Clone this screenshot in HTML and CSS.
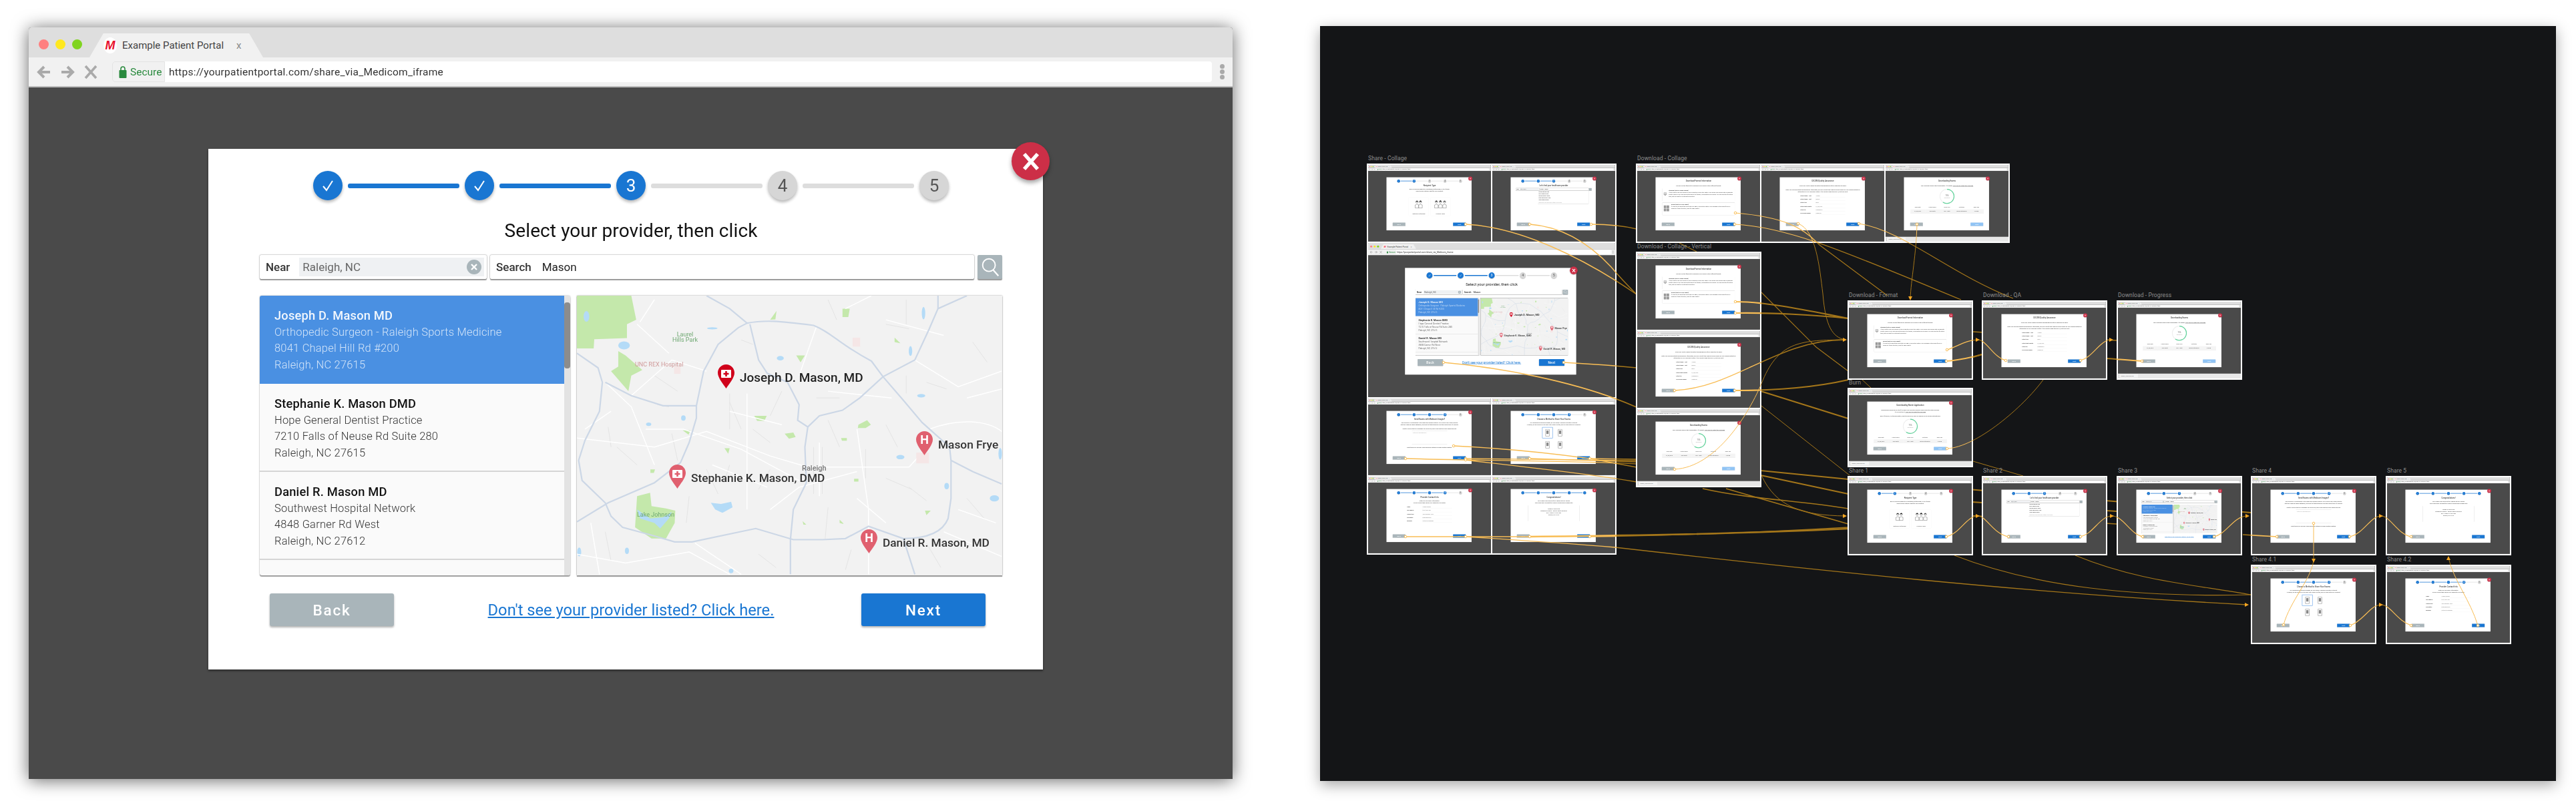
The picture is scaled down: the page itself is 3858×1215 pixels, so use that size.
FILE: index.html
```html
<!DOCTYPE html>
<html lang="en">
<head>
  <meta charset="UTF-8">
  <title>Share via Medicom - prototype</title>
  <link rel="stylesheet" href="styles.css">
</head>
<body>

<div class="left">
  <div class="win" id="mainWin">
    <div class="chrome">
      <div class="tabbar">
        <span class="light red"></span><span class="light yellow"></span><span class="light green"></span>
        <div class="tab">
          <span class="favicon">M</span>
          <span class="tabtitle">Example Patient Portal</span>
          <span class="tabclose">x</span>
        </div>
      </div>
      <div class="toolbar">
        <div class="nav">
          <svg viewBox="0 0 22 24" width="22" height="24"><path d="M11 4 3 12l8 8M3 12h17" fill="none" stroke="#aaa" stroke-width="4"/></svg>
          <svg viewBox="0 0 22 24" width="22" height="24"><path d="M11 4l8 8-8 8M19 12H2" fill="none" stroke="#aaa" stroke-width="4"/></svg>
          <svg viewBox="0 0 22 24" width="22" height="24"><path d="M3 3l16 18M19 3 3 21" fill="none" stroke="#aaa" stroke-width="3.6"/></svg>
        </div>
        <div class="address">
          <div class="secure">
            <svg viewBox="0 0 12 20" width="12" height="20"><path d="M3 8V5a3 3 0 0 1 6 0v3" fill="none" stroke="#2a8a3e" stroke-width="1.6"/><rect x="0.5" y="7" width="11" height="12" rx="1" fill="#2a8a3e"/></svg>
            <span>Secure</span>
          </div>
          <span class="url">https://yourpatientportal.com/share_via_Medicom_iframe</span>
        </div>
        <div class="menu"><i></i><i></i><i></i></div>
      </div>
    </div>
    <div class="stage">
      <div class="modal">
        <span class="close">
          <svg viewBox="0 0 24 24" width="30" height="30"><path d="M4 3l16 18M20 3 4 21" stroke="#fff" stroke-width="4.4" fill="none"/></svg>
        </span>
        <div class="modal-body">
          <div class="stepper">
            <span class="step on"><svg viewBox="0 0 24 24" width="24" height="24"><path d="M5 13l5 6L19 5" fill="none" stroke="#fff" stroke-width="2"/></svg></span>
            <span class="bar on"></span>
            <span class="step on"><svg viewBox="0 0 24 24" width="24" height="24"><path d="M5 13l5 6L19 5" fill="none" stroke="#fff" stroke-width="2"/></svg></span>
            <span class="bar on"></span>
            <span class="step on">3</span>
            <span class="bar"></span>
            <span class="step">4</span>
            <span class="bar"></span>
            <span class="step">5</span>
          </div>
          <h1 class="title">Select your provider, then click</h1>
          <div class="searchrow">
            <div class="sbox near">
              <b>Near</b>
              <span class="nearinput">Raleigh, NC<i class="clear">
                <svg viewBox="0 0 22 22" width="22" height="22"><circle cx="11" cy="11" r="11" fill="#a9b5ba"/><path d="M7 7l8 8M15 7l-8 8" stroke="#fff" stroke-width="2.4"/></svg>
              </i></span>
            </div>
            <div class="sbox query"><b>Search</b><span>Mason</span></div>
            <div class="sbtn">
              <svg viewBox="0 0 36 36" width="34" height="34"><circle cx="16" cy="15" r="10" fill="none" stroke="#fff" stroke-width="2"/><path d="M23 23l8 9" stroke="#fff" stroke-width="2.4"/></svg>
            </div>
          </div>
          <div class="results">
            <div class="list">
              <div class="rows">
                <div class="row picked">
                  <strong>Joseph D. Mason MD</strong>
                  <span>Orthopedic Surgeon - Raleigh Sports Medicine</span>
                  <span>8041 Chapel Hill Rd #200</span>
                  <span>Raleigh, NC 27615</span>
                </div>
                <div class="row">
                  <strong>Stephanie K. Mason DMD</strong>
                  <span>Hope General Dentist Practice</span>
                  <span>7210 Falls of Neuse Rd Suite 280</span>
                  <span>Raleigh, NC 27615</span>
                </div>
                <div class="row">
                  <strong>Daniel R. Mason MD</strong>
                  <span>Southwest Hospital Network</span>
                  <span>4848 Garner Rd West</span>
                  <span>Raleigh, NC 27612</span>
                </div>
              </div>
              <div class="scroll"><i></i></div>
            </div>
            <div class="map">
              <svg class="mapart" viewBox="32 42 1470 1253" preserveAspectRatio="none">
                <g fill="#c4e8ab">
                  <path d="M32 42H220L237 150 205 170V232L92 237 90 278H32z"/>
                  <path d="M175 290 200 310 258 375 220 400 210 470 150 380 175 360z"/>
                  <path d="M233 1080 290 1130H340L370 1060 372 1005 340 995 290 985 285 925 240 940z"/>
                  <path d="M645 580H688L680 603H655zM750 660 780 655 788 675 765 683zM1005 620 1035 600 1048 620 1030 635H1003zM790 310H820L805 340zM950 100H975L970 138H950zM700 150 722 110 718 148zM1130 250 1150 255 1130 230zM398 645H424L418 665zM542 725H560L555 750zM945 680H965V692H948zM990 862H1005V875H990zM1235 1005H1255L1240 1025zM940 1045 955 1065 940 1060zM286 820H302L298 836H286zM812 1052 825 1068H815z"/>
                </g>
                <g fill="#b4dbf7">
                  <path d="M240 1000 285 1040 330 1035 360 1010 350 1040 320 1085 300 1060 250 1040z"/>
                  <path d="M495 970 530 975 565 965 570 990 535 1015 510 1000z"/>
                  <ellipse cx="195" cy="265" rx="20" ry="18"/><ellipse cx="65" cy="135" rx="10" ry="24"/>
                  <ellipse cx="1475" cy="950" rx="16" ry="14"/><ellipse cx="1185" cy="290" rx="6" ry="22"/>
                  <ellipse cx="1150" cy="765" rx="14" ry="10"/><ellipse cx="735" cy="322" rx="12" ry="10"/>
                  <ellipse cx="1495" cy="750" rx="6" ry="26"/><ellipse cx="1222" cy="490" rx="14" ry="8"/>
                  <ellipse cx="400" cy="590" rx="8" ry="12"/><ellipse cx="280" cy="618" rx="9" ry="8"/>
                  <ellipse cx="500" cy="188" rx="18" ry="5"/><ellipse cx="40" cy="1190" rx="7" ry="20"/>
                  <ellipse cx="205" cy="1185" rx="7" ry="14"/><ellipse cx="565" cy="1275" rx="8" ry="10"/>
                  <ellipse cx="1310" cy="895" rx="8" ry="14"/><ellipse cx="1230" cy="120" rx="6" ry="28"/>
                </g>
                <g class="faint">
                  <path d="M560 480V640M740 470 700 580M1170 400V480M1030 730V860M850 720V930M880 720V930"/>
                  <path d="M360 660 380 780M140 630 150 720M700 820 660 910M1100 860 1190 910M900 990 890 1130"/>
                  <path d="M600 240 640 260M1100 170 1180 190M1240 430 1310 460M310 530 350 540M860 500H940"/>
                  <path d="M1170 60V170M900 60 930 150M300 400 380 470M560 800 540 880M1400 250 1450 340M1380 950 1440 1040"/>
                  <path d="M170 720 240 800M480 820 520 930M660 1200 720 1260M980 1180 960 1270M1240 1150 1290 1260M130 1100 150 1230"/>
                  <path d="M560 520 600 640M640 640 700 700M900 600 940 720M1100 620 1140 720M1180 900 1240 960M420 940 410 1060"/>
                </g>
                <g class="minor">
                  <path d="M32 680 300 720 480 650 700 760 830 810H1000L1180 810 1250 710"/>
                  <path d="M130 430 220 540 300 800"/>
                  <path d="M270 640H400L600 730 800 870"/>
                  <path d="M1250 640C1350 590 1450 600 1500 650"/>
                  <path d="M700 1000 800 900 1000 830"/>
                  <path d="M620 480V1000"/>
                  <path d="M870 700V940"/>
                  <path d="M440 1150 600 1290"/>
                  <path d="M1000 950 1100 1060"/>
                  <path d="M220 490 360 330 480 380"/>
                  <path d="M240 170 350 300"/>
                  <path d="M860 180 800 400"/>
                  <path d="M1200 330 1350 450 1500 380"/>
                  <path d="M1000 640 1040 1000V1290"/>
                  <path d="M32 1200 200 1240 420 1190 560 1290"/>
                  <path d="M80 1060 110 1290"/>
                  <path d="M1300 1100 1500 1210"/>
                  <path d="M960 100 1050 42"/>
                  <path d="M560 560 740 620M500 800 690 900M900 470 1120 500M1100 150 1300 220"/>
                  <path d="M300 60 250 160M1380 500 1500 460M1350 1000 1480 1060M150 560 60 640"/>
                </g>
                <g class="major">
                  <path d="M480 42 560 100 620 165C680 150 730 155 850 175 910 205 940 260 1050 335L1090 405 1160 510 1225 610 1320 720 1325 780V950L1315 1040C1300 1090 1260 1130 1160 1130L1040 1075 960 1130 880 1135H780L650 1085 430 1145H370L290 1115 190 1080 150 1030 130 970 50 870 38 780 60 690 110 560 120 430 105 365 32 300"/>
                  <path d="M130 430 220 490 330 535H445V590L420 700 390 790 300 880 140 970 32 1055"/>
                  <path d="M445 535 470 380 520 260 590 185 620 165"/>
                  <path d="M630 170 660 330 690 390 760 430 800 530 795 600 830 630 820 720 825 880 780 1000 770 1135V1290"/>
                  <path d="M830 630 870 580 950 555 1010 500 1090 405 1200 330 1250 190 1280 100 1380 42"/>
                  <path d="M1280 100V42M1325 780 1400 830 1500 885M1160 1130 1200 1290"/>
                </g>
                <g fill="#f5e6e6"><rect x="985" y="230" width="26" height="40"/><rect x="1205" y="745" width="44" height="48"/><rect x="368" y="360" width="22" height="32"/></g>
              </svg>
              <span class="place raleigh">Raleigh</span>
              <span class="place hospital">UNC REX Hospital</span>
              <span class="place park laurel">Laurel<br>Hills Park</span>
              <span class="place park lake">Lake Johnson</span>

              <div class="pin top joseph">
                <svg viewBox="0 0 25 36" width="25" height="36"><path class="pinbody" d="M12.5 0C5.6 0 0 5.6 0 12.5 0 20 8 29 12.5 36 17 29 25 20 25 12.5 25 5.6 19.4 0 12.5 0z"/><rect x="5" y="8" width="15" height="12" rx="1" fill="#fff"/><path d="M12.5 10v8M8.5 14h8" stroke="#d0021b" stroke-width="2.6"/></svg>
                <span>Joseph D. Mason, MD</span>
              </div>
              <div class="pin frye">
                <svg viewBox="0 0 25 36" width="25" height="36"><path class="pinbody" d="M12.5 0C5.6 0 0 5.6 0 12.5 0 20 8 29 12.5 36 17 29 25 20 25 12.5 25 5.6 19.4 0 12.5 0z"/><text x="12.5" y="19" text-anchor="middle">H</text></svg>
                <span>Mason Frye</span>
              </div>
              <div class="pin stephanie">
                <svg viewBox="0 0 25 36" width="25" height="36"><path class="pinbody" d="M12.5 0C5.6 0 0 5.6 0 12.5 0 20 8 29 12.5 36 17 29 25 20 25 12.5 25 5.6 19.4 0 12.5 0z"/><rect x="5" y="8" width="15" height="12" rx="1" fill="#fff"/><path d="M12.5 10v8M8.5 14h8" stroke="#e0606f" stroke-width="2.6"/></svg>
                <span>Stephanie K. Mason, DMD</span>
              </div>
              <div class="pin daniel">
                <svg viewBox="0 0 25 36" width="25" height="36"><path class="pinbody" d="M12.5 0C5.6 0 0 5.6 0 12.5 0 20 8 29 12.5 36 17 29 25 20 25 12.5 25 5.6 19.4 0 12.5 0z"/><text x="12.5" y="19" text-anchor="middle">H</text></svg>
                <span>Daniel R. Mason, MD</span>
              </div>
            </div>
          </div>
          <div class="foot">
            <span class="btn back">Back</span>
            <a class="notlisted" href="#">Don't see your provider listed? Click here.</a>
            <span class="btn next">Next</span>
          </div>
        </div>
      </div>
    </div>
  </div>
</div>

<!-- prototype board, filled by script.js -->
<div class="board" id="board">
  <svg class="wires under" id="wiresUnder" viewBox="1977 39 1851 1131"></svg>
  <svg class="wires over" id="wiresOver" viewBox="1977 39 1851 1131"></svg>
</div>

<script src="script.js"></script>
</body>
</html>
```

FILE: styles.css
```css
body {
  margin: 0;
  width: 3858px;
  height: 1215px;
  overflow: hidden;
  background: #fff;
  display: flex;
  align-items: flex-start;
  font-family: Roboto, "Liberation Sans", sans-serif;
}

.left {
  padding: 41px 131px 0 43px;
}

/* browser window */
.win {
  width: 1803px;
  height: 1126px;
  display: flex;
  flex-direction: column;
  border-radius: 4px 4px 0 0;
  overflow: hidden;
  background: #4a4a4a;
}

.left .win {
  box-shadow: 0 2px 26px rgba(0,0,0,0.6);
  filter: blur(0.4px);
}

.tabbar {
  height: 45px;
  background: #dedede;
  display: flex;
  align-items: flex-start;
  padding-left: 15px;
  box-sizing: border-box;
}

.light {
  width: 15px;
  height: 15px;
  border-radius: 50%;
  margin: 18px 10px 0 0;
}

.red { background: #ff8080; }
.yellow { background: #ffe81f; }
.green { background: #80d420; }

.tab {
  width: 260px;
  height: 36px;
  margin: 9px 0 0 1px;
  background: #f1f1f1;
  clip-path: polygon(8% 0, 92% 0, 100% 100%, 0 100%);
  display: flex;
  align-items: center;
  font-size: 15px;
  color: #444;
}

.favicon {
  width: 20px;
  height: 24px;
  margin: 0 8px 0 21px;
  border-radius: 50%;
  background: #fff;
  color: #e8112d;
  font: italic bold 18px/24px "Liberation Sans", sans-serif;
  text-align: center;
}

.tabclose {
  margin-left: 19px;
  color: #888;
}

.toolbar {
  height: 45px;
  box-sizing: border-box;
  background: #f1f1f1;
  border-bottom: 2px solid #bbb;
  display: flex;
  align-items: center;
}

.nav {
  display: flex;
  gap: 13px;
  margin: 0 21px 0 12px;
}

.address {
  flex: 1;
  height: 31px;
  background: #fff;
  border-radius: 4px;
  display: flex;
  align-items: center;
  font-size: 15.5px;
}

.secure {
  width: 79px;
  height: 31px;
  box-sizing: border-box;
  padding-left: 9px;
  margin-right: 6px;
  background: #f1f1f1;
  border: 1px solid #e4e4e4;
  border-radius: 4px 0 0 4px;
  display: flex;
  align-items: center;
  gap: 5px;
  color: #2a8a3e;
}

.url {
  color: #333;
  letter-spacing: 0.25px;
}

.menu {
  width: 31px;
  display: flex;
  flex-direction: column;
  align-items: center;
  gap: 1px;
}

.menu i {
  width: 7px;
  height: 7px;
  border-radius: 50%;
  background: #aaa;
}

.stage {
  flex: 1;
  position: relative;
  background: #4a4a4a;
  padding: 92px 0 0 269px;
}

/* modal */
.modal {
  width: 1250px;
  height: 780px;
  position: relative;
  background: #fff;
  box-shadow: 0 2px 3px rgba(0,0,0,0.45);
}

.close {
  position: absolute;
  top: -10px;
  right: -10px;
  width: 57px;
  height: 57px;
  border-radius: 50%;
  background: #cc2f47;
  box-shadow: 0 4px 6px rgba(0,0,0,0.35);
  display: flex;
  align-items: center;
  justify-content: center;
}

.modal-body {
  height: 100%;
  box-sizing: border-box;
  padding: 33px 61px 65px 77px;
  display: flex;
  flex-direction: column;
}

.stepper {
  display: flex;
  align-items: center;
  justify-content: center;
  gap: 8px;
  height: 44px;
  flex: none;
}

.step {
  width: 44px;
  height: 44px;
  border-radius: 50%;
  background: #d6d6d6;
  color: #555;
  font-size: 26px;
  display: flex;
  align-items: center;
  justify-content: center;
  box-shadow: 0 3px 4px rgba(0,0,0,0.28);
}

.step.on {
  background: #1976d2;
  color: #fff;
}

.bar {
  width: 167px;
  height: 7px;
  border-radius: 3px;
  background: #ddd;
}

.bar.on {
  background: #1976d2;
}

.title {
  margin: 30px 0 20px;
  font-size: 28px;
  line-height: 32px;
  font-weight: 400;
  text-align: center;
  color: #111;
  letter-spacing: 0.1px;
}

.searchrow {
  display: flex;
  gap: 5px;
  height: 36px;
  font-size: 17px;
}

.sbox {
  background: #fff;
  box-shadow: 0 0 2px rgba(0,0,0,0.55), 0 2px 1px #aaa;
  border-radius: 2px;
  display: flex;
  align-items: center;
  color: #222;
}

.sbox b {
  font-weight: 500;
  color: #333;
}

.near {
  width: 340px;
  padding-left: 9px;
  box-sizing: border-box;
  gap: 14px;
}

.nearinput {
  flex: 1;
  height: 28px;
  margin-right: 4px;
  padding-left: 5px;
  background: #eff1f3;
  color: #666;
  display: flex;
  align-items: center;
  justify-content: space-between;
}

.clear {
  display: flex;
  margin-right: 4px;
}

.query {
  flex: 1;
  padding-left: 9px;
  gap: 16px;
}

.sbtn {
  width: 37px;
  background: #a9b5ba;
  box-shadow: 0 2px 1px #999;
  border-radius: 2px;
  display: flex;
  align-items: center;
  justify-content: center;
}

.results {
  margin-top: 25px;
  height: 419px;
  display: flex;
  gap: 10px;
  flex: none;
}

.list {
  width: 465px;
  height: 419px;
  overflow: hidden;
  display: flex;
  background: #fafafa;
  border-radius: 3px;
  box-shadow: 0 0 2px rgba(0,0,0,0.4), 0 2px 1px #aaa;
}

.rows {
  flex: 1;
}

.row {
  height: 132px;
  padding-top: 18px;
  box-sizing: border-box;
  border-bottom: 2px solid #d5d5d5;
  display: flex;
  flex-direction: column;
  padding-left: 22px;
  font-size: 16.5px;
  line-height: 24.7px;
  font-weight: 300;
  color: #333;
  letter-spacing: 0.2px;
}

.row strong {
  font-size: 18.3px;
  font-weight: 500;
  color: #111;
}

.row.picked {
  background: #4a90e2;
  border-bottom: 0;
  color: #d2e4f9;
}

.row.picked strong {
  color: #f2f7fd;
}

.scroll {
  width: 9px;
  background: #e3e3e3;
  padding-top: 10px;
}

.scroll i {
  display: block;
  height: 99px;
  border-radius: 4px;
  background: #8c8c8c;
}

.map {
  flex: 1;
  position: relative;
  overflow: hidden;
  background: #f2f2f2;
  box-shadow: 0 0 2px rgba(0,0,0,0.4), 0 2px 1px #aaa;
}

.mapart {
  position: absolute;
  left: 0;
  top: 0;
  width: 100%;
  height: 100%;
}

.mapart path, .mapart ellipse, .mapart rect {
  vector-effect: non-scaling-stroke;
}

.major path {
  fill: none;
  stroke: #ccd7e6;
  stroke-width: 2.2;
}

.minor path {
  fill: none;
  stroke: #fff;
  stroke-width: 1.5;
}

.faint path {
  fill: none;
  stroke: #e4e4e4;
  stroke-width: 1;
}

.place {
  position: absolute;
  font-size: 9px;
  line-height: 8px;
  white-space: nowrap;
}

.raleigh { left: 337px; top: 255px; font-size: 11px; font-weight: 500; color: #777; }
.hospital { left: 87px; top: 99px; color: #d09a9a; }
.park { color: #6ea871; text-align: center; }
.laurel { left: 143px; top: 54px; }
.lake { left: 90px; top: 324px; }

.pin {
  position: absolute;
  display: flex;
  gap: 8px;
  white-space: nowrap;
  font-size: 17.3px;
  line-height: 26px;
  font-weight: 500;
  color: #333;
}

.pin span {
  margin-top: 7px;
}

.pin.top {
  font-size: 19px;
  color: #222;
}

.pinbody { fill: #e0606f; }
.pin.top .pinbody { fill: #d0021b; }

.pin text {
  fill: #fff;
  font: bold 18px Roboto, sans-serif;
}

.joseph { left: 211px; top: 103px; }
.frye { left: 508px; top: 203px; }
.stephanie { left: 138px; top: 253px; }
.daniel { left: 425px; top: 350px; }

.foot {
  margin-top: auto;
  height: 49px;
  flex: none;
  padding: 0 25px 0 15px;
  display: flex;
  align-items: center;
  justify-content: space-between;
}

.btn {
  width: 186px;
  height: 49px;
  border-radius: 3px;
  color: #fff;
  font-size: 22.5px;
  font-weight: 500;
  letter-spacing: 1.8px;
  display: flex;
  align-items: center;
  justify-content: center;
  box-shadow: 0 2px 3px rgba(0,0,0,0.3);
}

.back { background: #a9b5ba; }
.next { background: #1976d2; }
.next.pale { background: #90c4f5; }

.notlisted {
  margin-left: 10px;
  font-size: 23.7px;
  color: #1976d2;
}

/* board */
.board {
  position: relative;
  width: 1851px;
  height: 1131px;
  margin-top: 39px;
  background: #141517;
  box-shadow: 0 6px 20px rgba(0,0,0,0.35);
}

.wires {
  position: absolute;
  left: 0;
  top: 0;
  width: 100%;
  height: 100%;
}

.wires path {
  fill: none;
}

.under path { stroke: #a4761a; }
.over path { stroke: #f8bd55; }
.over circle { fill: #fff; stroke: #f8bd55; stroke-width: 1; }
.over polygon { fill: #f5a623; }

.over {
  z-index: 2;
  pointer-events: none;
}

.frame {
  position: absolute;
  display: grid;
  gap: 2px;
  padding: 2px;
  background: #fff;
  z-index: 1;
}

.framelabel {
  position: absolute;
  left: 2px;
  top: -13px;
  font-size: 8.5px;
  line-height: 10px;
  letter-spacing: 0.1px;
  color: #8e8e8e;
  white-space: nowrap;
}

.thumb {
  width: 184px;
  height: 115px;
  overflow: hidden;
  filter: blur(0.3px);
}

.thumb .win {
  transform: scale(0.102);
  transform-origin: 0 0;
}

.thumb.big {
  width: 370px;
  height: 231px;
  grid-column: span 2;
}

.thumb.big .win {
  transform: scale(0.2052);
}

/* other wizard screens, only seen small */
.v-sub {
  margin: 0 0 24px;
  font-size: 20px;
  line-height: 30px;
  text-align: center;
  color: #333;
}

.v-head {
  margin: 6px 0 40px;
}

.v-cards {
  display: flex;
  justify-content: center;
  gap: 40px;
  margin-top: 60px;
}

.v-card {
  width: 280px;
  height: 260px;
  box-shadow: 0 0 6px rgba(0,0,0,0.25);
  display: flex;
  flex-direction: column;
  align-items: center;
  justify-content: space-between;
  padding: 24px 0 16px;
  box-sizing: border-box;
  font-size: 18px;
  color: #444;
}

.v-devices {
  display: grid;
  grid-template-columns: 145px 145px;
  gap: 20px 40px;
  justify-content: center;
}

.v-device {
  height: 157px;
  box-shadow: 0 0 4px rgba(0,0,0,0.2);
  display: flex;
  align-items: center;
  justify-content: center;
}

.v-device.sel {
  outline: 5px solid #4a90e2;
}

.v-drop {
  width: 720px;
  margin: 0 0 0 323px;
  padding: 6px 12px;
  box-shadow: 0 1px 6px rgba(0,0,0,0.35);
  font-size: 19px;
  line-height: 30px;
  color: #333;
}

.v-drop span {
  display: block;
}

.v-drop em {
  font-style: normal;
  color: #aaa;
}

.v-info {
  margin: 0 0 25px 24px;
  width: 1062px;
  height: 183px;
  box-sizing: border-box;
  padding: 18px 16px;
  box-shadow: 0 0 4px rgba(0,0,0,0.18);
  display: flex;
  gap: 28px;
  font-size: 19px;
  line-height: 28px;
  color: #444;
}

.v-info b {
  display: block;
  color: #222;
  font-weight: 500;
}

.v-form {
  width: 660px;
  margin: 0 auto;
  display: grid;
  grid-template-columns: 220px 1fr;
  row-gap: 8px;
  font-size: 18px;
  line-height: 42px;
  color: #444;
}

.v-form span {
  border-bottom: 2px solid #e5e5e5;
  padding-left: 8px;
  color: #777;
}

.v-ring {
  display: block;
  margin: 0 auto 20px;
}

.v-table {
  width: 1075px;
  margin: 0 auto;
  display: grid;
  grid-template-columns: repeat(5, 1fr);
  font-size: 18px;
  line-height: 56px;
  color: #555;
  text-align: center;
  box-shadow: 0 0 3px rgba(0,0,0,0.25);
}

.v-table i {
  font-style: normal;
  background: #f4f4f4;
}

.v-area {
  width: 520px;
  height: 190px;
  margin: 0 auto 36px;
  padding: 12px;
  box-sizing: border-box;
  box-shadow: 0 0 4px rgba(0,0,0,0.25);
  color: #aaa;
  font-size: 18px;
}

.v-note {
  width: 750px;
  height: 230px;
  margin: 0 auto;
  padding-top: 30px;
  box-sizing: border-box;
  box-shadow: 0 0 4px rgba(0,0,0,0.25);
  font-size: 19px;
  line-height: 30px;
  text-align: center;
  color: #444;
}

.dlbar {
  position: absolute;
  left: 0;
  right: 0;
  bottom: 0;
  height: 70px;
  background: #e8e8e8;
  display: flex;
  align-items: center;
  padding-left: 14px;
}

.dlfile {
  width: 250px;
  height: 50px;
  line-height: 50px;
  background: #f4f4f4;
  box-shadow: 0 0 4px rgba(0,0,0,0.3);
  font-size: 20px;
  color: #666;
  padding-left: 30px;
}
```

FILE: script.js
```js
// builds the small screens on the prototype board from the big window
const mainWin = document.getElementById("mainWin");
const board = document.getElementById("board");
const ORIGIN_X = 1977, ORIGIN_Y = 39;

const check = '<svg viewBox="0 0 24 24" width="24" height="24"><path d="M5 13l5 6L19 5" fill="none" stroke="#fff" stroke-width="2"/></svg>';

function stepper(done) {
  let html = '<div class="stepper">';
  for (let i = 1; i <= 5; i++) {
    html += '<span class="step' + (i <= done ? ' on' : '') + '">' + (i < done ? check : i) + '</span>';
    if (i < 5) html += '<span class="bar' + (i < done ? ' on' : '') + '"></span>';
  }
  return html + '</div>';
}

function foot(paleNext) {
  return '<div class="foot"><span class="btn back">Back</span><span class="btn next' + (paleNext ? ' pale' : '') + '">Next</span></div>';
}

function person(x, hair) {
  return '<circle cx="' + x + '" cy="36" r="17" fill="#fff" stroke="#111" stroke-width="3"/>' +
    '<path d="M' + (x - 17) + ' 32q17 -' + hair + ' 34 0" fill="#111" stroke="#111" stroke-width="3"/>' +
    '<path d="M' + (x - 26) + ' 124v-44q26 -20 52 0v44z" fill="#fff" stroke="#111" stroke-width="3"/>';
}

const doctors = '<svg viewBox="0 0 170 130" width="170" height="130">' + person(60, 22) + person(112, 26) + '</svg>';
const friends = '<svg viewBox="0 0 190 130" width="190" height="130">' + person(35, 30) + person(95, 34) + person(155, 18) + '</svg>';
const device = '<svg viewBox="0 0 80 110" width="80" height="110"><rect x="12" y="4" width="56" height="102" rx="6" fill="#fff" stroke="#555" stroke-width="4"/><rect x="24" y="22" width="32" height="50" fill="#888"/></svg>';
const burnIcon = '<svg viewBox="0 0 120 130" width="120" height="130"><rect x="6" y="10" width="108" height="80" rx="6" fill="#999"/><rect x="22" y="24" width="76" height="52" fill="#eee"/><path d="M60 36v28M46 50h28" stroke="#666" stroke-width="6"/><path d="M34 96h52v20H34z" fill="#999"/></svg>';
const gridIcon = '<svg viewBox="0 0 120 130" width="120" height="130"><g fill="#999"><rect x="4" y="6" width="52" height="56"/><rect x="64" y="6" width="52" height="56"/><rect x="4" y="70" width="52" height="56"/><rect x="64" y="70" width="52" height="56"/></g></svg>';
const ring = '<svg class="v-ring" viewBox="0 0 230 230" width="230" height="230"><circle cx="115" cy="115" r="104" fill="none" stroke="#eee" stroke-width="10"/><path d="M115 11a104 104 0 1 1 -60 190" fill="none" stroke="#5fd39a" stroke-width="12"/><text x="115" y="112" text-anchor="middle" font-size="26" fill="#777">75%</text><text x="115" y="142" text-anchor="middle" font-size="18" fill="#aaa">Remaining</text></svg>';

const statusTable = '<div class="v-table">' +
  '<span>Exam Date</span><span>Patient Name</span><span>Exam Type</span><span>Institution</span><span>Exam Size</span>' +
  '<i>01/28/2018</i><i>Jane Smith</i><i>MRI - Right</i><i>Raleigh Orthopedic</i><i>19.8 MB</i></div>';

const screens = {
  recipient: stepper(2) +
    '<h1 class="title">Recipient Type</h1>' +
    '<p class="v-sub">Are you sending exams to a healthcare professional, or to a friend?<br>Select which category best fits your recipient.</p>' +
    '<div class="v-cards"><div class="v-card">' + doctors + 'Healthcare Professional</div><div class="v-card">' + friends + 'Friends &amp; Family</div></div>' + foot(),
  find: stepper(3) +
    '<h1 class="title">Let\'s find your healthcare provider</h1>' +
    '<div class="searchrow"><div class="sbox near"><b>Near</b><span class="nearinput">City, ST, ZIP</span></div><div class="sbox query"><b>Search</b><span>Barber</span></div><div class="sbtn"></div></div>' +
    '<div class="v-drop"><span>Donald Barber MD</span><span>Bruce Barber MD</span><span>Emma Barber DMD</span><span>Debra Anderson PhD</span><span>Sarah Barber DDS</span><em>Don\'t see your provider listed? Click here.</em></div>' + foot(),
  medicom: stepper(4) +
    '<h1 class="title">Send Exams with Medicom Images?</h1>' +
    '<p class="v-sub">This provider is a participant in the Medicom Images network. We\'ll deliver your exams directly<br>into their medical image database, ensuring the fastest delivery and the highest level of security.</p>' +
    '<p class="v-sub">Want to include text or a message you would say, then click Next and we\'ll handle the rest.</p>' +
    '<div class="v-area">Write your message here...</div>' +
    '<p class="v-sub">Don\'t think your provider uses Medicom network? Choose another method.</p>' + foot(),
  method: stepper(4) +
    '<h1 class="title">Choose a Method to Share Your Exams</h1>' +
    '<p class="v-sub">We recommend Medicom Images, as your exam is always encrypted in transit.<br>However, we also allow you to share your exams via fax, mail or email with your recipient.</p>' +
    '<div class="v-devices"><div class="v-device sel">' + device + '</div><div class="v-device">' + device + '</div><div class="v-device">' + device + '</div><div class="v-device">' + device + '</div></div>' + foot(),
  contact: stepper(4) +
    '<h1 class="title">Provider Contact Info</h1>' +
    '<p class="v-sub">Enter your provider\'s information.<br>We will encrypt and deliver your exams to your doctor.</p>' +
    '<div class="v-form"><b>Name</b><span>Joseph Mason</span><b>Fax Number</b><span>(919) 555-1234</span><b>Subject Line</b><span>Jane Johnson - MRI</span><b>Encryption</b><span>Enter password</span><b>Message</b><span>Write your message</span></div>' + foot(),
  congrats: stepper(6) +
    '<h1 class="title">Congratulations!</h1>' +
    '<p class="v-sub">Your exams were successfully shared with Dr. Mason<br>Your exam were successfully shared via Medicom Images with</p>' +
    '<div class="v-note">Joseph D. Mason MD<br>Orthopedic Surgeon - Raleigh Sports Medicine<br>8041 Chapel Hill Rd #200<br>Raleigh, NC 27615</div>' + foot(),
  format:
    '<h1 class="title v-head">Download Format Information</h1>' +
    '<p class="v-sub">We give you the flexibility to download your exams in two different formats.</p>' +
    '<div class="v-info">' + burnIcon + '<div><b>Standard (best for offline viewing)</b>If you\'d like to view your exams on your computer, choose this option. We\'ll bundle your exams with a diagnostic quality viewer so you can browse through all the images, incorporating your exams. You can open this file at any time, with no need for an internet connection.</div></div>' +
    '<div class="v-info">' + gridIcon + '<div><b>DICOM (best for PACS import)</b>If you\'d like to import the exam into your PACS, choose this option. We\'ll package all the image files in a single ZIP folder structure, ideal for PACS import.</div></div>' + foot(),
  quality:
    '<h1 class="title v-head">DICOM Quality Assurance</h1>' +
    '<p class="v-sub">Would you like to change the patient demographics before importing to PACS?</p>' +
    '<p class="v-sub">Enter your desired patient demographics information, and we\'ll modify the exam\'s DICOM header so your images match the information in your receiving system. If you wish to keep these as is, just click Next.</p>' +
    '<div class="v-form"><b>Patient Name - First</b><span>Joseph</span><b>Patient Name - Last</b><span>Mason</span><b>Patient Sex</b><span>Male</span><b>Patient Date of Birth</b><span>01/28/1969</span><b>Patient ID</b><span>0052839271</span><b>Accession Number</b><span>R5382734</span></div>' + foot(),
  progress:
    '<h1 class="title v-head">Downloading Exams</h1>' +
    '<p class="v-sub">Your download should start immediately. If it doesn\'t, <u>click here to restart the download</u></p>' +
    ring + statusTable + foot(true),
  burner:
    '<h1 class="title v-head">Downloading Burner Application</h1>' +
    '<p class="v-sub">Downloading Medicom\'s on-the-fly burner now. Keep this window open during the entire process.<br>If you don\'t see it, <u>click here to restart the download</u></p>' +
    '<p class="v-sub">Once it finishes, run the application, insert a blank disc, and your exams will be burned automatically.</p>' +
    ring + statusTable + foot(true)
};

function thumb(name, big) {
  const box = document.createElement("div");
  box.className = big ? "thumb big" : "thumb";
  const win = mainWin.cloneNode(true);
  win.removeAttribute("id");
  if (name !== "provider") {
    win.querySelector(".modal-body").innerHTML = screens[name];
  }
  if (name === "progress" || name === "burner") {
    win.querySelector(".stage").insertAdjacentHTML("beforeend", '<div class="dlbar"><span class="dlfile">Exams_download.zip</span></div>');
  }
  box.appendChild(win);
  return box;
}

// frames: label, left, top, columns, screens ("*" marks the big one)
const frames = [
  ["Share - Collage", 2047, 245, 2, ["recipient", "find", "*provider", "medicom", "method", "contact", "congrats"]],
  ["Download - Collage", 2450, 245, 3, ["format", "quality", "progress"]],
  ["Download - Collage - Vertical", 2450, 377, 1, ["format", "quality", "progress"]],
  ["Download - Format", 2767, 450, 1, ["format"]],
  ["Download - QA", 2968, 450, 1, ["quality"]],
  ["Download - Progress", 3170, 450, 1, ["progress"]],
  ["Burn", 2767, 581, 1, ["burner"]],
  ["Share 1", 2767, 713, 1, ["recipient"]],
  ["Share 2", 2968, 713, 1, ["find"]],
  ["Share 3", 3170, 713, 1, ["provider"]],
  ["Share 4", 3371, 713, 1, ["medicom"]],
  ["Share 5", 3573, 713, 1, ["congrats"]],
  ["Share 4.1", 3371, 846, 1, ["method"]],
  ["Share 4.2", 3573, 846, 1, ["contact"]]
];

frames.forEach(function (f) {
  const el = document.createElement("div");
  el.className = "frame";
  el.style.left = (f[1] - ORIGIN_X) + "px";
  el.style.top = (f[2] - ORIGIN_Y) + "px";
  el.style.gridTemplateColumns = "repeat(" + f[3] + ", 184px)";
  const label = document.createElement("span");
  label.className = "framelabel";
  label.textContent = f[0];
  el.appendChild(label);
  f[4].forEach(function (name) {
    const big = name[0] === "*";
    el.appendChild(thumb(big ? name.slice(1) : name, big));
  });
  board.appendChild(el);
});

// source frame rectangles, the bright part of a wire stays inside these
const rects = {
  sc: [2047, 245, 374, 587], dc: [2450, 245, 561, 119], dv: [2450, 377, 188, 355],
  f: [2767, 450, 188, 119], q: [2968, 450, 188, 119], p: [3170, 450, 188, 119], b: [2767, 581, 188, 119],
  s1: [2767, 713, 188, 119], s2: [2968, 713, 188, 119], s3: [3170, 713, 188, 119], s4: [3371, 713, 188, 119],
  s5: [3573, 713, 188, 119], s41: [3371, 846, 188, 119], s42: [3573, 846, 188, 119]
};

const wires = [
  ["sc", "M2195 336C2275 340 2370 385 2451 441", 1.4],
  ["sc", "M2291 336C2345 340 2385 370 2413 400C2430 420 2440 430 2451 441", 1.4],
  ["sc", "M2383 336C2410 336 2430 338 2451 343", 1.4],
  ["sc", "M2162 543C2240 550 2360 570 2451 610", 1.6],
  ["sc", "M2342 543C2380 545 2420 548 2451 551", 1.6],
  ["sc", "M2105 687C2200 690 2350 690 2451 695", 1.3],
  ["sc", "M2195 687L2451 690", 1.3],
  ["sc", "M2291 687L2451 692", 1.3],
  ["sc", "M2381 687L2451 688", 1.3],
  ["sc", "M2177 668C2260 672 2330 680 2381 687L2451 700", 1.3],
  ["sc", "M2195 689C2280 700 2370 708 2451 722", 1.3],
  ["sc", "M2105 804H2291", 1.4],
  ["sc", "M2195 804C2290 810 2360 815 2419 820C2700 852 3030 888 3365 906", 1.3],
  ["sc", "M2291 804C2450 802 2600 800 2768 792", 2.4],
  ["sc", "M2381 804C2450 803 2600 800 2768 790", 1.6],
  ["dc", "M2599 319C2670 325 2700 340 2725 367L2827 443", 1.2],
  ["dc", "M2598 336C2680 340 2770 380 2937 449", 1.2],
  ["dc", "M2693 335C2720 345 2725 400 2730 440C2734 490 2745 505 2763 509", 1],
  ["dc", "M2784 335C2850 345 2920 410 3015 447", 1.2],
  ["dc", "M2871 336C2870 380 2862 420 2861 447", 1],
  ["dv", "M2599 452C2650 452 2720 468 2768 477", 2.2],
  ["dv", "M2599 469C2650 468 2720 472 2768 477", 2.2],
  ["dv", "M2508 585C2600 580 2660 510 2763 509", 1.4],
  ["dv", "M2598 585C2660 585 2720 580 2768 569", 2.2],
  ["dv", "M2508 703C2570 700 2620 620 2640 570C2665 510 2700 510 2763 509", 1],
  ["f", "M2916 524C2930 520 2945 509 2962 509", 1.2],
  ["f", "M2915 541C2930 540 2950 536 2969 531", 2],
  ["q", "M3004 540C2985 535 2975 509 2962 509", 1.2],
  ["q", "M3116 540C3135 535 3145 509 3162 509", 1.2],
  ["p", "M3208 541C3190 540 3170 538 3155 537", 2],
  ["b", "M2916 672C2960 670 3030 610 3060 569", 1],
  ["s1", "M2915 804C2935 800 2945 773 2962 773", 1.2],
  ["s2", "M3008 804C2985 800 2975 773 2962 773", 1.2],
  ["s2", "M3116 804C3135 800 3145 773 3163 773", 1.2],
  ["s3", "M3209 804C3190 800 3180 773 3163 773", 1.2],
  ["s3", "M3316 804C3335 800 3345 773 3366 773", 1.2],
  ["s4", "M3410 804C3395 803 3375 802 3359 801", 1.6],
  ["s4", "M3519 804C3540 800 3550 773 3566 773", 1.2],
  ["s5", "M3611 804C3590 800 3580 773 3566 773", 1.2],
  ["s4", "M3465 784V840", 1],
  ["s41", "M3420 936C3430 900 3460 870 3465 840", 1],
  ["s41", "M3520 937C3540 930 3550 906 3566 906", 1.2],
  ["s42", "M3611 937C3590 930 3580 906 3566 906", 1.2],
  ["s42", "M3711 937C3700 900 3675 870 3667 836", 1],
  // parts that only show in the gaps between frames
  [null, "M2515 364 2541 377", 1.2],
  [null, "M2638 438 2720 520 2768 556", 1.1],
  [null, "M2637 586 2768 627", 2],
  [null, "M2638 608 2770 712", 1],
  [null, "M2637 705 2768 718 3371 768", 2],
  [null, "M2637 712 2768 740 3170 766", 2],
  [null, "M2550 732C2620 748 2700 750 2768 762L3170 785", 1.6],
  [null, "M2585 732 2768 785", 1.6],
  [null, "M2638 712C2660 760 2700 772 2763 773", 1],
  [null, "M2789 569 2802 581", 1],
  [null, "M2955 691 3030 713", 1],
  [null, "M2927 832C3050 880 3200 895 3371 891", 1.2],
  [null, "M3108 832C3200 870 3280 875 3371 891", 1.2],
  [null, "M2955 497 3170 510", 1.4],
  [null, "M2955 535 2968 531", 2]
];

const NS = "http://www.w3.org/2000/svg";
const under = document.getElementById("wiresUnder");
const over = document.getElementById("wiresOver");

function svgEl(tag, attrs, parent) {
  const e = document.createElementNS(NS, tag);
  Object.keys(attrs).forEach(function (k) { e.setAttribute(k, attrs[k]); });
  parent.appendChild(e);
  return e;
}

const defs = svgEl("defs", {}, over);
Object.keys(rects).forEach(function (k) {
  const r = rects[k];
  const clip = svgEl("clipPath", { id: "clip-" + k }, defs);
  svgEl("rect", { x: r[0], y: r[1], width: r[2], height: r[3] }, clip);
  svgEl("g", { id: "group-" + k, "clip-path": "url(#clip-" + k + ")" }, over);
});

wires.forEach(function (w) {
  svgEl("path", { d: w[1], "stroke-width": w[2] }, under);
  if (w[0]) svgEl("path", { d: w[1], "stroke-width": w[2] }, document.getElementById("group-" + w[0]));
});

// start dots
wires.forEach(function (w) {
  if (!w[0]) return;
  const m = /^M(\d+) (\d+)/.exec(w[1]);
  svgEl("circle", { cx: m[1], cy: m[2], r: 1.8 }, over);
});

// arrow heads: x, y, direction in degrees
[[2763, 509, 0], [2962, 509, 0], [3162, 509, 0], [2861, 447, 90], [2763, 773, 0], [2962, 773, 0], [3163, 773, 0],
 [3366, 773, 0], [3566, 773, 0], [3465, 840, 90], [3365, 906, 0], [3566, 906, 0], [3667, 836, -90]].forEach(function (a) {
  svgEl("polygon", { points: "-3,-3 3,0 -3,3", transform: "translate(" + a[0] + " " + a[1] + ") rotate(" + a[2] + ")" }, over);
});
```
